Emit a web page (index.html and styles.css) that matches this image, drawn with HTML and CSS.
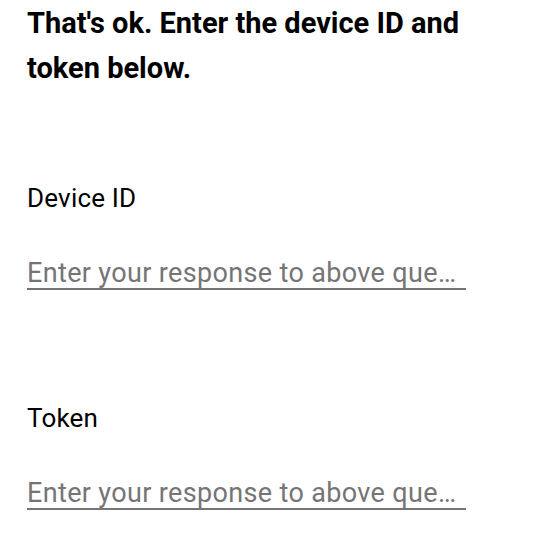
FILE: index.html
```html
<!DOCTYPE html>
<html>
<head>
<meta charset="utf-8">
<link rel="stylesheet" href="styles.css">
</head>
<body>
<main class="form">
  <h1 class="title">That's ok. Enter the device ID and token below.</h1>
  <div class="field">
    <label class="label" for="device">Device ID</label>
    <input class="input" id="device" type="text" placeholder="Enter your response to above question">
  </div>
  <div class="field">
    <label class="label" for="token">Token</label>
    <input class="input" id="token" type="text" placeholder="Enter your response to above question">
  </div>
</main>
</body>
</html>
```

FILE: styles.css
```css
html, body {
  margin: 0;
  padding: 0;
  background: #ffffff;
}
body {
  font-family: Roboto, "Liberation Sans", sans-serif;
  color: #000000;
}
.form {
  padding: 0 27px;
  display: flex;
  flex-direction: column;
}
.title {
  margin: 0;
  padding-top: 1px;
  font-size: 29px;
  font-weight: 700;
  line-height: 45px;
  width: 460px;
}
.field {
  display: flex;
  flex-direction: column;
  margin-top: 92px;
}
.field + .field {
  margin-top: 113px;
}
.label {
  font-size: 26px;
  line-height: 30px;
  letter-spacing: 0.2px;
}
.input {
  margin-top: 45px;
  width: 439px;
  height: 32px;
  box-sizing: border-box;
  border: none;
  border-bottom: 2px solid #757575;
  padding: 0;
  font-family: Roboto, "Liberation Sans", sans-serif;
  font-size: 27px;
  line-height: 30px;
  letter-spacing: 0.35px;
  color: #000;
  background: transparent;
  outline: none;
  text-overflow: ellipsis;
}
.input::placeholder {
  color: #757575;
  opacity: 1;
}
```
